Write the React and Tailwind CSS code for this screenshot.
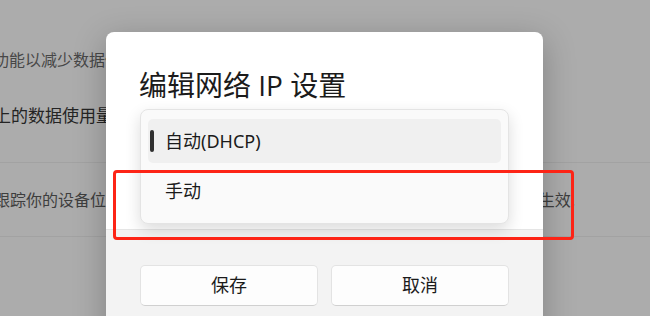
export default function App() {
  return (
    <div className="relative w-[650px] h-[316px] overflow-hidden bg-[#acacac] font-['Noto_Sans','Noto_Sans_CJK_SC',sans-serif]">
      {/* dimmed settings page behind the dialog */}
      <div className="flex flex-col">
        <div className="h-[50px]" />
        <div className="h-[20px] leading-[20px] text-[16px] text-[#474747] whitespace-nowrap ml-[-7px]">
          功能以减少数据使用量
        </div>
        <div className="h-[34px]" />
        <div className="h-[24px] leading-[24px] text-[17px] text-[#242424] whitespace-nowrap ml-[-6px]">
          上的数据使用量
        </div>
        <div className="h-[35px] border-b border-[#a2a2a2]" />
        <div className="flex items-center h-[74px] border-b border-[#a2a2a2] text-[16px] text-[#3e3e3e] whitespace-nowrap">
          <span className="ml-[-6px]">跟踪你的设备位置</span>
          <span className="ml-auto mr-[75px]">生效.</span>
        </div>
      </div>

      {/* dialog */}
      <div className="absolute left-[106px] top-[32px] w-[437px] h-[320px] rounded-[8px] bg-white shadow-[0_8px_32px_rgba(0,0,0,0.25)] overflow-hidden flex flex-col">
        <div className="h-[197px] px-[33px] pt-[35px]">
          <h1 className="text-[28px] leading-[36px] font-normal text-[#1b1b1b] whitespace-nowrap font-['Open_Sans','Noto_Sans_CJK_SC',sans-serif]">
            编辑网络 IP 设置
          </h1>
        </div>
        <div className="flex-1 bg-[#f3f3f3] border-t border-[#e5e5e5] px-[34px] pt-[35px] flex gap-[13px]">
          <button className="w-[178px] h-[41px] rounded-[5px] bg-[#fdfdfd] border border-[#e3e3e3] border-b-[#d0d0d0] text-[18px] text-[#1b1b1b]">
            保存
          </button>
          <button className="w-[178px] h-[41px] rounded-[5px] bg-[#fdfdfd] border border-[#e3e3e3] border-b-[#d0d0d0] text-[18px] text-[#1b1b1b]">
            取消
          </button>
        </div>

        {/* combobox flyout */}
        <div className="absolute left-[34px] top-[77px] w-[369px] h-[115px] rounded-[8px] bg-[#fafafa] border border-[#e4e4e4] shadow-[0_6px_16px_rgba(0,0,0,0.14)] px-[7px] pt-[9px] flex flex-col gap-[6px]">
          <div className="h-[44px] rounded-[5px] bg-[#f0f0f0] flex items-center">
            <div className="w-[4px] h-[22px] rounded-full bg-[#303030] ml-[2px]" />
            <span className="ml-[11px] text-[18px] text-[#1b1b1b]">自动(DHCP)</span>
          </div>
          <div className="h-[44px] flex items-center">
            <span className="ml-[17px] text-[18px] text-[#1b1b1b]">手动</span>
          </div>
        </div>
      </div>

      {/* red annotation box */}
      <div className="absolute left-[113px] top-[170px] w-[461px] h-[70px] rounded-[4px] border-[3px] border-[#fd2416]" />
    </div>
  );
}
